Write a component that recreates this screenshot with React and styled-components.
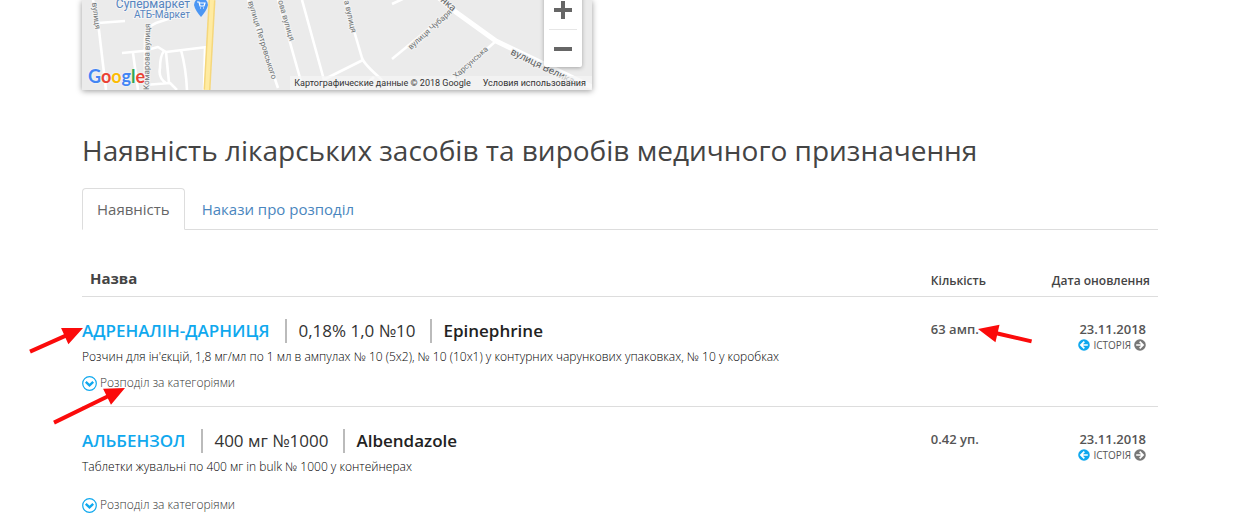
import React, { useState } from "react";
import styled, { createGlobalStyle } from "styled-components";

const drugs = [
  {
    id: 1,
    name: "АДРЕНАЛІН-ДАРНИЦЯ",
    dose: "0,18% 1,0 №10",
    inn: "Epinephrine",
    text: "Розчин для ін'єкцій, 1,8 мг/мл по 1 мл в ампулах № 10 (5х2), № 10 (10х1) у контурних чарункових упаковках, № 10 у коробках",
    amount: "63 амп.",
    date: "23.11.2018",
    marked: true,
  },
  {
    id: 2,
    name: "АЛЬБЕНЗОЛ",
    dose: "400 мг №1000",
    inn: "Albendazole",
    text: "Таблетки жувальні по 400 мг in bulk № 1000 у контейнерах",
    amount: "0.42 уп.",
    date: "23.11.2018",
    tall: true,
  },
];

const tabs = ["Наявність", "Накази про розподіл"];

const Arrow = ({ width, height, from, angle, length }) => (
  <svg width={width} height={height} fill="#fb0b0b" aria-hidden="true">
    <g transform={`translate(${from[0]} ${from[1]}) rotate(${angle})`}>
      <path d={`M0 0 L20 -9 V-2 H${length} V2 H20 V9 Z`} />
    </g>
  </svg>
);

const MapDrawing = () => (
  <svg width="510" height="90" viewBox="0 0 510 90" aria-hidden="true">
    <rect width="510" height="90" fill="#ebebeb" />
    <g fill="none" stroke="#fff" strokeWidth="2.6" strokeLinejoin="round">
      <path d="M11 0 L16 22 L24 90 M16 23 L43 21" />
      <path d="M40 53 L61 51 L76 47 L84 52 L125 47" />
      <path d="M63 90 V38 Q64 27 74 23 L95 16" />
      <path d="M51 53 L56 90 M82 51 Q78 56 78 68 Q76 78 84 83 M63 85 L88 83 L95 90" />
      <path d="M84 52 L87 83 M99 50 Q104 68 105 90 M123 48 L122 90" />
      <path d="M166 0 L196 88 M196 0 L220 85 M220 0 L242 80 M241 80 L281 60" />
      <path d="M263 0 L280 58 Q282 64 298 78 L308 90 M278 90 L292 77" />
      <path d="M310 4 L325 -3 M310 59 L372 8 M414 41 L358 90" />
      <path d="M350 -8 L371 10 L414 41 L510 87" strokeWidth="5" />
    </g>
    <path d="M130 0 L125 90" stroke="#f5d77c" strokeWidth="7" />
    <path d="M130 0 L125 90" stroke="#ffeba1" strokeWidth="4" />
    <g
      fontFamily="Roboto, sans-serif"
      fontSize="8"
      fill="#6f7374"
      stroke="#f2f2f2"
      strokeWidth="2"
      paintOrder="stroke"
    >
      <text transform="translate(10 3) rotate(83)">вулиця</text>
      <text transform="translate(67 90) rotate(-89)">Комарова вулиця</text>
      <text transform="translate(166 2) rotate(73)">вулиця Петровського</text>
      <text transform="translate(196 1) rotate(74)">ова вулиця</text>
      <text transform="translate(262 1) rotate(77)">а вулиця</text>
      <text transform="translate(329 50) rotate(-42)">вулиця Чубаря</text>
      <text transform="translate(374 79) rotate(-42)">Харсунська</text>
      <text transform="translate(358 1) rotate(40)" fontSize="10" fill="#606364">нка</text>
      <text transform="translate(428 54) rotate(26)" fontSize="10" fill="#606364">вулиця Велика</text>
    </g>
    <g
      fontFamily="Roboto, sans-serif"
      fill="#5584bf"
      stroke="#f5f5f5"
      strokeWidth="2"
      paintOrder="stroke"
      textAnchor="end"
    >
      <text x="108" y="8" fontSize="12">Супермаркет</text>
      <text x="108" y="18" fontSize="10">АТБ-Маркет</text>
    </g>
    <path d="M112 5 A7 7 0 1 1 126 5 Q125 10 119 17 Q113 10 112 5 Z" fill="#4b96f3" />
    <path d="M115 2 H117 L118 6 H122 L123 3 H117.5 M118 8 h1 M121 8 h1" fill="none" stroke="#fff" strokeWidth="1.2" />
  </svg>
);

const ChevronIcon = () => (
  <svg width="15" height="15" viewBox="0 0 15 15" fill="none" stroke="#0fa8ee" aria-hidden="true">
    <circle cx="7.5" cy="7.5" r="6.8" strokeWidth="1.2" />
    <path d="M3.8 5.8 L7.5 9.3 L11.2 5.8" strokeWidth="2.4" />
  </svg>
);

const HistoryIcon = ({ color, flip }) => (
  <svg width="12" height="12" viewBox="0 0 11 11" aria-hidden="true">
    <circle cx="5.5" cy="5.5" r="5.3" fill={color} />
    <path
      d="M5.8 2.4 L2.7 5.5 L5.8 8.6 M3 5.5 H9"
      transform={flip ? "rotate(180 5.5 5.5)" : undefined}
      fill="none"
      stroke="#fff"
      strokeWidth="1.6"
    />
  </svg>
);

const App = () => {
  const [active, setActive] = useState(0);

  return (
    <Page>
      <GlobalStyle />
      <MapBox>
        <MapDrawing />
        <GoogleLink href="#google" aria-label="Google">
          <Letter $color="#4285f4">G</Letter>
          <Letter $color="#ea4335">o</Letter>
          <Letter $color="#fbbc05">o</Letter>
          <Letter $color="#4285f4">g</Letter>
          <Letter $color="#34a853">l</Letter>
          <Letter $color="#ea4335">e</Letter>
        </GoogleLink>
        <MapZoom>
          <ZoomButton type="button" aria-label="+">
            <svg width="18" height="18" stroke="#666" strokeWidth="4">
              <path d="M0 9 H18 M9 0 V18" />
            </svg>
          </ZoomButton>
          <ZoomButton type="button" aria-label="−">
            <svg width="18" height="18" stroke="#666" strokeWidth="4">
              <path d="M0 9 H18" />
            </svg>
          </ZoomButton>
        </MapZoom>
        <MapCredits>
          <span>Картографические данные © 2018 Google</span>
          <a href="#terms">Условия использования</a>
        </MapCredits>
      </MapBox>

      <Title>Наявність лікарських засобів та виробів медичного призначення</Title>

      <TabList role="tablist">
        {tabs.map((tab, i) => (
          <Tab
            key={tab}
            type="button"
            role="tab"
            aria-selected={active === i}
            $active={active === i}
            onClick={() => setActive(i)}
          >
            {tab}
          </Tab>
        ))}
      </TabList>

      <DrugTable>
        <thead>
          <tr>
            <HeadCell $big>Назва</HeadCell>
            <HeadCell $width="121px">Кількість</HeadCell>
            <HeadCell $width="114px" $right>
              Дата оновлення
            </HeadCell>
          </tr>
        </thead>
        <tbody>
          {drugs.map((drug) => (
            <tr key={drug.id}>
              <NameCell>
                <DrugTitle>
                  <DrugLink href={`#drug-${drug.id}`}>{drug.name}</DrugLink>
                  <Dose>{drug.dose}</Dose>
                  <Inn>{drug.inn}</Inn>
                </DrugTitle>
                <DrugText $tall={drug.tall}>{drug.text}</DrugText>
                <MoreButton type="button">
                  <ChevronIcon />
                  Розподіл за категоріями
                </MoreButton>
                {drug.marked && (
                  <>
                    <Mark $left="-56px" $top="24px">
                      <Arrow width={60} height={34} from={[57, 7]} angle={156} length={58} />
                    </Mark>
                    <Mark $left="-30px" $top="85px">
                      <Arrow width={76} height={44} from={[73, 6]} angle={154} length={79} />
                    </Mark>
                  </>
                )}
              </NameCell>
              <Cell>
                {drug.amount}
                {drug.marked && (
                  <Mark $left="54px" $top="22px">
                    <Arrow width={58} height={28} from={[1, 10]} angle={13} length={55} />
                  </Mark>
                )}
              </Cell>
              <Cell $right>
                {drug.date}
                <History>
                  <HistoryIcon color="#0fa8ee" />
                  <a href={`#history-${drug.id}`}>ІСТОРІЯ</a>
                  <HistoryIcon color="#777" flip />
                </History>
              </Cell>
            </tr>
          ))}
        </tbody>
      </DrugTable>
    </Page>
  );
};

const GlobalStyle = createGlobalStyle`
  * {
    box-sizing: border-box;
  }
  body {
    margin: 0;
    background: #fff;
    color: #444;
    font-family: "Open Sans", sans-serif;
  }
  button {
    font-family: inherit;
    cursor: pointer;
  }
  a {
    color: inherit;
    text-decoration: none;
  }
`;

const Page = styled.main`
  padding: 0 92px 0 82px;
`;

const MapBox = styled.section`
  position: relative;
  max-width: 510px;
  overflow: hidden;
  box-shadow: 0 1px 6px rgba(0, 0, 0, 0.4);
  svg {
    display: block;
  }
`;

const GoogleLink = styled.a`
  position: absolute;
  left: 6px;
  bottom: 2px;
  font-family: Lato, sans-serif;
  font-size: 18px;
  font-weight: 700;
  line-height: 24px;
  text-shadow: 0 0 2px #fff;
`;

const Letter = styled.span`
  color: ${(props) => props.$color};
`;

const MapZoom = styled.div`
  position: absolute;
  right: 10px;
  bottom: 23px;
  width: 38px;
  padding: 0 5px;
  background: #fff;
  border-radius: 2px;
  box-shadow: 0 1px 4px rgba(0, 0, 0, 0.3);
`;

const ZoomButton = styled.button`
  display: flex;
  align-items: center;
  justify-content: center;
  width: 100%;
  height: 39px;
  padding: 0;
  border: 0;
  background: none;
  & + & {
    height: 38px;
    border-top: 1px solid #e6e6e6;
  }
`;

const MapCredits = styled.div`
  position: absolute;
  right: 0;
  bottom: 0;
  display: flex;
  gap: 12px;
  padding: 0 6px 0 4px;
  background: rgba(245, 245, 245, 0.7);
  color: #333;
  font-family: Roboto, sans-serif;
  font-size: 9px;
  line-height: 14px;
  white-space: nowrap;
`;

const Title = styled.h1`
  margin: 41px 0 19px;
  font-size: 28px;
  font-weight: 400;
  line-height: 38px;
  color: #444;
`;

const TabList = styled.div`
  display: flex;
  gap: 2px;
  border-bottom: 1px solid #ddd;
`;

const Tab = styled.button`
  height: 42px;
  margin-bottom: -1px;
  padding: 0 14px;
  border: 1px solid ${(props) => (props.$active ? "#ddd" : "transparent")};
  border-bottom-color: ${(props) => (props.$active ? "#fff" : "transparent")};
  border-radius: 4px 4px 0 0;
  background: ${(props) => (props.$active ? "#fff" : "none")};
  color: ${(props) => (props.$active ? "#666" : "#4a86be")};
  font-size: 15px;
`;

const DrugTable = styled.table`
  width: 100%;
  margin-top: 30px;
  border-collapse: separate;
  border-spacing: 0;
`;

const HeadCell = styled.th`
  width: ${(props) => props.$width || "auto"};
  padding: 6px 8px;
  border-bottom: 1px solid #ddd;
  font-size: ${(props) => (props.$big ? "15px" : "12px")};
  font-weight: ${(props) => (props.$big ? 700 : 600)};
  line-height: ${(props) => (props.$big ? "24px" : "18px")};
  text-align: ${(props) => (props.$right ? "right" : "left")};
  vertical-align: bottom;
  white-space: nowrap;
`;

const Cell = styled.td`
  position: relative;
  padding: 22px ${(props) => (props.$right ? "12px" : "8px")} 12px 8px;
  border-bottom: 1px solid #ddd;
  color: #555;
  font-size: 13px;
  font-weight: 600;
  line-height: 20px;
  text-align: ${(props) => (props.$right ? "right" : "left")};
  vertical-align: top;
  white-space: nowrap;
`;

const NameCell = styled(Cell)`
  padding: 22px 8px 14px 0;
  white-space: normal;
`;

const DrugTitle = styled.div`
  display: flex;
  font-size: 17px;
  line-height: 24px;
  color: #222;
`;

const DrugLink = styled.a`
  color: #0fa8ee;
  font-weight: 600;
`;

const Dose = styled.span`
  margin: 0 11px 0 16px;
  padding: 0 15px 0 11px;
  border: solid #bbb;
  border-width: 0 2px;
  color: #333;
  font-weight: 400;
`;

const Inn = styled.span`
  font-weight: 600;
`;

const DrugText = styled.p`
  margin: 4px 0 ${(props) => (props.$tall ? "19px" : "7px")};
  color: #000;
  font-size: 12px;
  font-weight: 300;
  line-height: 20px;
`;

const MoreButton = styled.button`
  display: flex;
  align-items: center;
  gap: 3px;
  padding: 0;
  border: 0;
  background: none;
  color: #333;
  font-size: 12px;
  font-weight: 300;
  line-height: 18px;
`;

const History = styled.div`
  display: flex;
  align-items: center;
  justify-content: flex-end;
  gap: 3px;
  font-size: 10px;
  font-weight: 400;
  line-height: 12px;
`;

const Mark = styled.span`
  position: absolute;
  left: ${(props) => props.$left};
  top: ${(props) => props.$top};
  pointer-events: none;
  svg {
    display: block;
  }
`;

export default App;
